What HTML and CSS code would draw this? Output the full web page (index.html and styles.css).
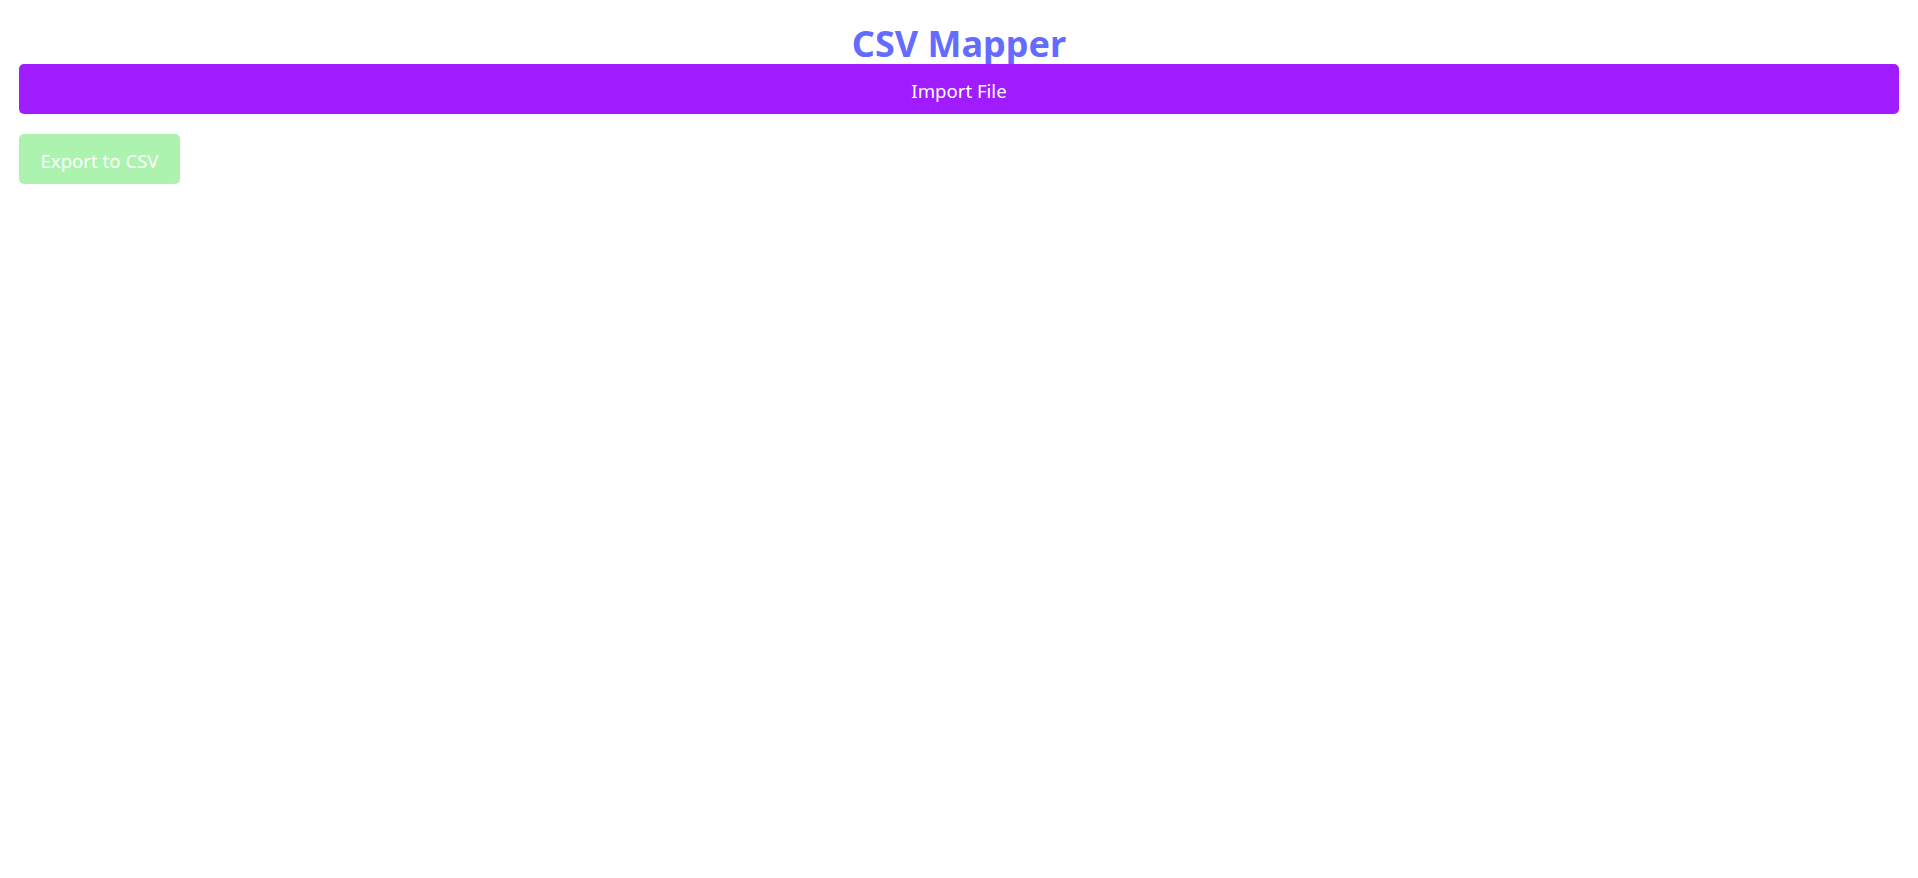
FILE: index.html
```html
<!DOCTYPE html>
<html lang="en">
<head>
<meta charset="utf-8">
<title>CSV Mapper</title>
<link rel="stylesheet" href="styles.css">
</head>
<body>
<div class="app">
  <h1 class="title">CSV Mapper</h1>
  <button class="btn btn-import">Import File</button>
  <div class="actions">
    <button class="btn btn-export" disabled>Export to CSV</button>
  </div>
</div>
</body>
</html>
```
FILE: styles.css
```css
html, body {
  margin: 0;
  padding: 0;
  background: #ffffff;
}
body {
  font-family: "Noto Sans", "Open Sans", sans-serif;
}
.app {
  padding: 0 19px;
  display: flex;
  flex-direction: column;
}
.title {
  margin: 20px 0 0 0;
  height: 44px;
  line-height: 48px;
  text-align: center;
  font-size: 36px;
  font-weight: 700;
  color: #646cff;
}
.btn {
  border: none;
  border-radius: 5px;
  height: 50px;
  padding: 2px 0 0 0;
  font-family: "Noto Sans", "Open Sans", sans-serif;
  font-size: 18.6px;
  color: #ffffff;
  cursor: pointer;
}
.btn-import {
  width: 100%;
  background: #a01cff;
}
.actions {
  margin-top: 20px;
  display: flex;
}
.btn-export {
  width: 161px;
  background: #abf3ae;
}
```
